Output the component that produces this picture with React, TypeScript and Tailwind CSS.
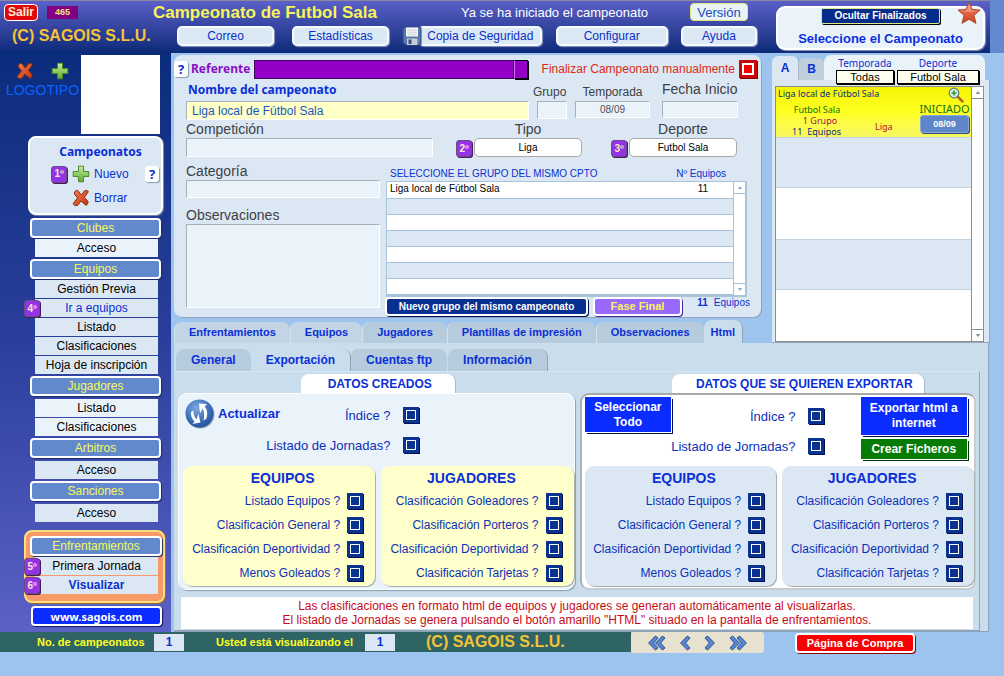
import React from "react";

const sans = "font-['Liberation_Sans',Arial,sans-serif]";
const humanist = "font-['Noto_Sans','DejaVu_Sans',sans-serif]";

function CrossIcon() {
  return (
    <svg viewBox="0 0 18 18" className="size-[18px] shrink-0" aria-hidden="true">
      <defs>
        <linearGradient id="cross" x1="0" y1="0" x2="1" y2="1">
          <stop offset="0" stopColor="#f08050" />
          <stop offset="1" stopColor="#c2330f" />
        </linearGradient>
      </defs>
      <path
        d="M4.4 1.4 Q6 1 7 3 L9.2 6 L12.6 1.8 Q14.6 0.6 16.4 2.6 L12.4 8.4 L16 12.4 Q16.6 15 14 16.4 L9 12 L5.6 16.4 Q3 17.6 1 14.8 L5.6 8.8 L2.4 5 Q1.8 2.4 4.4 1.4 Z"
        fill="url(#cross)"
        stroke="#8c2c10"
        strokeWidth="1"
        strokeLinejoin="round"
      />
    </svg>
  );
}

function PlusIcon() {
  return (
    <svg viewBox="0 0 18 18" className="size-[18px] shrink-0" aria-hidden="true">
      <defs>
        <linearGradient id="plus" x1="0" y1="0" x2="0" y2="1">
          <stop offset="0" stopColor="#c6ec9a" />
          <stop offset="1" stopColor="#5aab2e" />
        </linearGradient>
      </defs>
      <path
        d="M6.5 1.2 h5 v5.3 h5.3 v5 h-5.3 v5.3 h-5 v-5.3 h-5.3 v-5 h5.3 Z"
        fill="url(#plus)"
        stroke="#4c8a2c"
        strokeWidth="1"
        strokeLinejoin="round"
      />
    </svg>
  );
}

function FloppyIcon() {
  return (
    <svg viewBox="0 0 20 20" className="relative size-[20px] shrink-0" aria-hidden="true">
      <path d="M1 2 Q1 1 2 1 H18 Q19 1 19 2 V19 H3.5 L1 16.5 Z" fill="#5577ad" stroke="#2e4a7d" />
      <rect x="4" y="1.5" width="12" height="9" fill="#f3f5f8" />
      <path d="M5.5 4 h9 M5.5 6.2 h9 M5.5 8.4 h9" stroke="#c3c8d0" strokeWidth="0.8" />
      <rect x="5" y="12.5" width="10.5" height="6.5" fill="#c9ced6" />
      <rect x="6.5" y="13.5" width="3" height="4.5" fill="#3a4f78" />
    </svg>
  );
}

function StarIcon() {
  return (
    <svg viewBox="0 0 24 24" className="size-[24px]" aria-hidden="true">
      <defs>
        <linearGradient id="star" x1="0" y1="0" x2="0" y2="1">
          <stop offset="0" stopColor="#ee8a6c" />
          <stop offset="1" stopColor="#d0401c" />
        </linearGradient>
      </defs>
      <path
        d="M12 1 L15 8.4 L23 9 L17 14.4 L19 22.4 L12 18.2 L5 22.4 L7 14.4 L1 9 L9 8.4 Z"
        fill="url(#star)"
        stroke="#b04a30"
        strokeLinejoin="round"
      />
      <path d="M12 3.4 L14.2 9.2 L20 9.8 Q12 12 4 9.8 L9.8 9.2 Z" fill="#f7b29c" opacity="0.6" />
    </svg>
  );
}

function ZoomIcon() {
  return (
    <svg viewBox="0 0 16 16" className="size-[16px]" aria-hidden="true">
      <path d="M9.6 9.6 L14.4 14.4" stroke="#a8642c" strokeWidth="2.6" strokeLinecap="round" />
      <circle cx="6" cy="6" r="4.8" fill="#d9efe6" stroke="#5f7f86" strokeWidth="1.2" />
      <path d="M6 3.4 V8.6 M3.4 6 H8.6" stroke="#2f9a3c" strokeWidth="1.6" />
    </svg>
  );
}

function RefreshIcon() {
  return (
    <svg viewBox="0 0 30 30" className="size-[30px] shrink-0" aria-hidden="true">
      <defs>
        <radialGradient id="refresh" cx="0.4" cy="0.3" r="0.8">
          <stop offset="0" stopColor="#7fa9df" />
          <stop offset="0.7" stopColor="#3164ae" />
          <stop offset="1" stopColor="#1d4486" />
        </radialGradient>
      </defs>
      <circle cx="15.4" cy="15.6" r="14" fill="#8ea6c4" />
      <circle cx="14.5" cy="14.5" r="14" fill="url(#refresh)" />
      <path
        d="M6 13 L8.4 11.6 Q8.4 18 11.6 20.2 L13.4 14.8 L15.4 23.4 L7.4 25 L9.6 22.4 Q5.6 19 6 13 Z"
        fill="#fff"
      />
      <path
        d="M14 4.6 L22 5 L19.6 7.4 Q23.6 12 21.4 19.4 L18.6 21.6 Q20 13.6 17.6 9.6 L15 14.4 Z"
        fill="#fff"
      />
    </svg>
  );
}

function NavIcon({ double = false, flip = false }: { double?: boolean; flip?: boolean }) {
  return (
    <svg
      viewBox={double ? "0 0 18 16" : "0 0 12 16"}
      className={`h-[16px] ${double ? "w-[18px]" : "w-[12px]"} ${flip ? "rotate-180" : ""}`}
      aria-hidden="true"
    >
      <path d="M1 3 L3.6 1 L10.4 8 L3.6 15 L1 13 L5.4 8 Z" fill="#5187dc" stroke="#3a4f7a" strokeLinejoin="round" />
      {double && (
        <path d="M8 3 L10.6 1 L17.4 8 L10.6 15 L8 13 L12.4 8 Z" fill="#5187dc" stroke="#3a4f7a" strokeLinejoin="round" />
      )}
    </svg>
  );
}

function StepBadge({ n }: { n: number }) {
  return (
    <span className="flex h-[17px] w-[16px] shrink-0 items-center justify-center rounded-[3px] border border-[#6b4a86] bg-[#9333e6] text-[10px] leading-none font-bold text-[#ffe6c8] shadow-[1px_1px_0_#4a1a5c]">
      {n}º
    </span>
  );
}

function HelpButton() {
  return (
    <button
      type="button"
      aria-label="Ayuda"
      className={`flex h-[16px] w-[14px] shrink-0 items-center justify-center rounded-[3px] bg-white text-[13px] leading-none font-bold text-[#0a2fd0] shadow-[1px_1px_1px_#8a9bb0] ${humanist}`}
    >
      ?
    </button>
  );
}

const headerButton =
  "flex h-[20px] items-center justify-center rounded-[5px] border-2 border-[#f4f9fd] bg-[#dbe9f4] text-[12px] leading-none text-[#0b2fc8] shadow-[1px_1px_1px_#8b9bc0]";

function Header() {
  return (
    <header className="flex h-[53px]">
      <div className="flex min-w-0 flex-1 border-t border-[#8a8a9a] bg-linear-to-b from-[#5b60c8] to-[#0a2a78]">
        <div className="flex min-w-0 flex-1 flex-col">
          <div className="flex h-[22px] items-center pl-1">
            <button
              type="button"
              className="flex h-[17px] w-[34px] items-center justify-center rounded-[4px] border border-white bg-[#e00808] text-[12px] leading-none font-bold text-[#fff0d8]"
            >
              Salir
            </button>
            <span className="ml-[9px] flex h-[13px] w-[31px] items-center justify-center bg-[#800080] text-[9px] leading-none font-bold text-[#ffe080]">
              465
            </span>
            <h1 className="ml-[75px] text-[17px] leading-none font-bold whitespace-nowrap text-[#f8f45c]">
              Campeonato de Futbol Sala
            </h1>
            <p className="ml-auto text-[13px] leading-none whitespace-nowrap text-white">
              Ya se ha iniciado el campeonato
            </p>
            <button
              type="button"
              className="mr-[18px] ml-[42px] flex h-[18px] w-[58px] items-center justify-center rounded-[4px] border border-[#dfe67a] bg-[#eaf4f6] text-[13px] leading-none text-[#1a4ab8]"
            >
              Versión
            </button>
          </div>
          <div className="flex h-[26px] items-center pr-[9px] pl-3">
            <p className="w-[165px] text-[16px] leading-none font-bold whitespace-nowrap text-[#f2c238]">
              (C) SAGOIS S.L.U.
            </p>
            <div className="flex flex-1 items-center justify-between">
              <div className="flex gap-[18px]">
                <button type="button" className={`${headerButton} w-[97px]`}>Correo</button>
                <button type="button" className={`${headerButton} w-[97px]`}>Estadísticas</button>
              </div>
              <div className="flex items-center">
                <FloppyIcon />
                <button type="button" className={`${headerButton} -ml-[4px] w-[124px]`}>Copia de Seguridad</button>
              </div>
              <button type="button" className={`${headerButton} w-[112px]`}>Configurar</button>
              <button type="button" className={`${headerButton} w-[76px]`}>Ayuda</button>
            </div>
          </div>
        </div>
        <div className="relative mt-[5px] mr-[5px] ml-[10px] flex h-[44px] w-[209px] shrink-0 flex-col items-center rounded-[9px] border-2 border-white bg-[#ebf3fa] shadow-[1px_1px_1px_#8b9bc0]">
          <button
            type="button"
            className="flex h-[16px] w-[119px] items-center justify-center rounded-[2px] border border-[#dbe68a] bg-[#062c8a] text-[10px] leading-none font-bold text-white shadow-[1px_1px_0_#000]"
          >
            Ocultar Finalizados
          </button>
          <h2 className="mt-[8px] text-[13px] leading-none font-bold whitespace-nowrap text-[#0a2fe0]">
            Seleccione el Campeonato
          </h2>
          <span className="absolute -top-[7px] right-[2px]">
            <StarIcon />
          </span>
        </div>
      </div>
      <div className="w-[14px] bg-[#6488cf]" />
    </header>
  );
}

type Item = { label: string; tone?: string; badge?: number };
type Group = { title: string; items: Item[]; gap: string; tone: string };

const groups: Group[] = [
  { title: "Clubes", gap: "mt-px", tone: "bg-[#ebf3fa]", items: [{ label: "Acceso" }] },
  {
    title: "Equipos",
    gap: "mt-px",
    tone: "bg-[#dbe8f3]",
    items: [
      { label: "Gestión Previa" },
      { label: "Ir a equipos", tone: "text-[#0b2fd0]", badge: 4 },
      { label: "Listado" },
      { label: "Clasificaciones" },
      { label: "Hoja de inscripción" },
    ],
  },
  { title: "Jugadores", gap: "mt-[3px]", tone: "bg-[#ebf3fa]", items: [{ label: "Listado" }, { label: "Clasificaciones" }] },
  { title: "Arbitros", gap: "mt-[3px]", tone: "bg-[#dbe8f3]", items: [{ label: "Acceso" }] },
  { title: "Sanciones", gap: "mt-[3px]", tone: "bg-[#dbe8f3]", items: [{ label: "Acceso" }] },
];

const sideHeading =
  "flex h-[20px] items-center justify-center rounded-[4px] border-2 border-white bg-[#6289cc] text-[12px] leading-none text-[#f6f95a] shadow-[1px_1px_1px_#1b2c6a]";

function SideItem({ item, tone }: { item: Item; tone: string }) {
  return (
    <li className="relative">
      <a
        href="#"
        className={`flex h-[18px] items-center justify-center text-[12px] leading-none whitespace-nowrap ${tone} ${item.tone ?? "text-black"}`}
      >
        {item.label}
      </a>
      {item.badge && (
        <span className="absolute top-px -left-[11px]">
          <StepBadge n={item.badge} />
        </span>
      )}
    </li>
  );
}

function Sidebar() {
  return (
    <aside className="w-[171px] shrink-0 bg-linear-to-b from-[#0a2c7c] via-[#2a3f9c] to-[#5c61c6]">
      <div className="flex pt-[2px]">
        <div className="flex w-[81px] flex-col items-center pl-[4px]">
          <div className="mt-[7px] flex gap-[17px]">
            <button type="button" aria-label="Quitar logotipo"><CrossIcon /></button>
            <button type="button" aria-label="Añadir logotipo"><PlusIcon /></button>
          </div>
          <p className="mt-[3px] text-[14px] leading-none text-[#0a62ff]">LOGOTIPO</p>
        </div>
        <div className="h-[79px] w-[79px] bg-white" />
      </div>

      <section className="mt-[2px] ml-[28px] flex h-[79px] w-[135px] flex-col rounded-[8px] border-2 border-white bg-[#dbe8f3] shadow-[1px_1px_1px_#7f8fae]">
        <h2 className={`mt-[7px] pl-[10px] text-center text-[12px] leading-[14px] font-bold text-[#0a2fd8] ${humanist}`}>Campeonatos</h2>
        <div className="mt-[6px] flex h-[18px] items-center pr-[2px] pl-[21px]">
          <StepBadge n={1} />
          <button type="button" className="ml-[5px] flex items-center gap-[4px] text-[12px] leading-none text-[#0b2fd0]">
            <PlusIcon />
            Nuevo
          </button>
          <span className="ml-auto"><HelpButton /></span>
        </div>
        <button type="button" className="mt-[6px] ml-[42px] flex items-center gap-[4px] text-[12px] leading-none text-[#0b2fd0]">
          <CrossIcon />
          Borrar
        </button>
      </section>

      <nav className="mt-px ml-[30px] w-[131px]">
        {groups.map((g) => (
          <section key={g.title} className="pt-[2px]">
            <h3 className={sideHeading}>{g.title}</h3>
            <ul className={`ml-[5px] flex w-[123px] flex-col gap-px ${g.gap}`}>
              {g.items.map((it) => (
                <SideItem key={it.label} item={it} tone={g.tone} />
              ))}
            </ul>
          </section>
        ))}
      </nav>

      <section className="mt-[8px] ml-[24px] h-[73px] w-[141px] rounded-[8px] border-2 border-[#fbe07c] bg-[#f79a68] pt-[4px] pr-px pl-[4px] shadow-[1px_1px_0_#a86a30]">
        <h3 className={sideHeading}>Enfrentamientos</h3>
        <ul className="mt-px ml-[5px] flex w-[123px] flex-col gap-px">
          <SideItem item={{ label: "Primera Jornada", badge: 5 }} tone="bg-[#dbe8f3]" />
          <SideItem item={{ label: "Visualizar", badge: 6, tone: "font-bold text-[#0b2fd0]" }} tone="bg-[#dbe8f3]" />
        </ul>
      </section>
      <a
        href="#"
        className={`mt-[3px] mb-[6px] ml-[31px] flex h-[20px] w-[131px] items-center justify-center rounded-[4px] border-2 border-white bg-[#0a2cff] text-[11px] leading-none font-bold text-white shadow-[1px_1px_1px_#101c60] ${humanist}`}
      >
        www.sagois.com
      </a>
    </aside>
  );
}

const field =
  "block border border-t-[#a9b0b6] border-l-[#a9b0b6] border-r-white border-b-white outline-none";
const fieldLabel = "block h-[18px] text-[14px] leading-[18px] whitespace-nowrap text-[#3c4046]";
const roundSelect =
  "h-[19px] w-[108px] appearance-none rounded-[5px] border border-[#a9a9a9] bg-white text-center text-[10px] leading-none text-black [text-align-last:center]";

function ScrollBar({ tone, width }: { tone: string; width: string }) {
  return (
    <div className={`flex shrink-0 flex-col justify-between border-l bg-white ${tone} ${width}`}>
      <button type="button" aria-label="Subir" className="flex h-[12px] w-full items-center justify-center border-b border-inherit">
        <svg viewBox="0 0 6 4" className="h-[3px] w-[6px]"><path d="M0 4 L3 0 L6 4 Z" fill="currentColor" /></svg>
      </button>
      <button type="button" aria-label="Bajar" className="flex h-[12px] w-full items-center justify-center border-t border-inherit">
        <svg viewBox="0 0 6 4" className="h-[3px] w-[6px]"><path d="M0 0 L3 4 L6 0 Z" fill="currentColor" /></svg>
      </button>
    </div>
  );
}

function ChampionshipForm() {
  const rows = ["Liga local de Fútbol Sala", "", "", "", "", "", ""];
  return (
    <form className="mt-[2px] h-[262px] rounded-[8px] bg-[#dbe8f3] pt-[4px] shadow-[1px_1px_0_#8fa3bd]">
      <div className="flex h-[20px] items-center pr-[4px]">
        <HelpButton />
        <label htmlFor="referente" className={`ml-[3px] w-[63px] text-[12px] leading-none font-bold text-[#8a0fc8] ${humanist}`}>
          Referente
        </label>
        <div className="flex min-w-0 flex-1">
          <select id="referente" className="h-[19px] min-w-0 flex-1 appearance-none border border-[#3a0a5c] bg-[#9400c8] text-white" />
          <span className="h-[19px] w-[14px] border border-y-black border-r-black border-l-[#c878e0] bg-[#9400c8] shadow-[1px_1px_0_#000]" />
        </div>
        <label htmlFor="finalizar" className="ml-[14px] text-[12px] leading-none whitespace-nowrap text-[#e02818]">
          Finalizar Campeonato manualmente
        </label>
        <input
          id="finalizar"
          type="checkbox"
          className="ml-[4px] size-[18px] shrink-0 appearance-none border-3 border-[#c80808] bg-[#f80000] shadow-[inset_0_0_0_2px_#fff,1px_1px_0_#8a0000]"
        />
      </div>

      <div className="mt-[4px] flex pr-[23px] pl-[12px]">
        <div className="min-w-0 flex-1">
          <label htmlFor="nombre" className={`block h-[18px] pl-[2px] text-[12px] leading-[14px] font-bold text-[#0a2fd8] ${humanist}`}>
            Nombre del campeonato
          </label>
          <input id="nombre" defaultValue="Liga local de Fútbol Sala" className={`${field} h-[19px] w-full bg-[#ffffc8] pl-[5px] text-[12px] text-[#1a5ac0]`} />
        </div>
        <div className="ml-[4px] w-[36px]">
          <label htmlFor="grupo" className="block h-[18px] text-[12px] leading-[18px] text-[#3c4046]">Grupo</label>
          <input id="grupo" className={`${field} ml-[4px] h-[18px] w-[30px] bg-[#ebf3fa]`} />
        </div>
        <div className="ml-[6px] w-[75px]">
          <label htmlFor="temporada" className="block h-[18px] text-center text-[12px] leading-[18px] text-[#3c4046]">Temporada</label>
          <input id="temporada" defaultValue="08/09" className={`${field} h-[17px] w-full bg-[#ebf3fa] text-center text-[10px] text-[#4a4f56]`} />
        </div>
        <div className="ml-[12px] w-[76px]">
          <label htmlFor="fecha" className="block h-[18px] text-[14px] leading-[13px] whitespace-nowrap text-[#3c4046]">Fecha Inicio</label>
          <input id="fecha" className={`${field} h-[17px] w-full bg-[#ebf3fa]`} />
        </div>
      </div>

      <div className="flex pr-[24px] pl-[12px]">
        <div className="min-w-0 flex-1">
          <label htmlFor="competicion" className={fieldLabel}>Competición</label>
          <input id="competicion" className={`${field} h-[19px] w-full bg-[#ebf3fa]`} />
        </div>
        <div className="ml-[23px] flex items-end gap-[2px]">
          <StepBadge n={2} />
          <div>
            <label htmlFor="tipo" className={`${fieldLabel} text-center`}>Tipo</label>
            <select id="tipo" className={`${roundSelect} block`}><option>Liga</option></select>
          </div>
        </div>
        <div className="ml-[29px] flex items-end gap-[2px]">
          <StepBadge n={3} />
          <div>
            <label htmlFor="deporte" className={`${fieldLabel} text-center`}>Deporte</label>
            <select id="deporte" className={`${roundSelect} block`}><option>Futbol Sala</option></select>
          </div>
        </div>
      </div>

      <div className="mt-[5px] flex pr-[8px] pl-[12px]">
        <div className="w-[194px] shrink-0">
          <label htmlFor="categoria" className={fieldLabel}>Categoría</label>
          <input id="categoria" className={`${field} h-[18px] w-full bg-[#ebf3fa]`} />
          <label htmlFor="observaciones" className={`${fieldLabel} mt-[8px]`}>Observaciones</label>
          <textarea id="observaciones" className={`${field} h-[84px] w-full resize-none bg-[#ebf3fa]`} />
        </div>
        <div className="ml-[6px] min-w-0 flex-1">
          <div className="flex h-[19px] items-end justify-between pr-[27px] pl-[4px] text-[10px] leading-[14px] whitespace-nowrap text-[#0b2fd0]">
            <span>SELECCIONE EL GRUPO DEL MISMO CPTO</span>
            <span>Nº Equipos</span>
          </div>
          <div className="mr-[6px] flex h-[116px] border border-r-2 border-b-2 border-[#a9c4d8]">
            <table className="flex-1 border-collapse self-start text-[10px] leading-none text-black">
              <tbody>
                {rows.map((name, i) => (
                  <tr key={i} className={`h-[16px] border-b border-[#a4c2dc] ${i % 2 ? "bg-[#dbe8f3]" : "bg-white"}`}>
                    <td className="p-0 pb-[2px] pl-[3px]">{name}</td>
                    <td className="w-[60px] p-0 pb-[2px] text-center">{name ? "11" : ""}</td>
                  </tr>
                ))}
              </tbody>
            </table>
            <ScrollBar tone="border-[#a4c2dc] text-[#8ab0d8]" width="w-[12px]" />
          </div>
          <div className="flex">
            <button type="button" className="-ml-px flex h-[19px] w-[203px] items-center justify-center rounded-[4px] border-2 border-white bg-[#083090] text-[10px] leading-none font-bold whitespace-nowrap text-white shadow-[1px_1px_0_#02104a]">
              Nuevo grupo del mismo campeonato
            </button>
            <button type="button" className="ml-[5px] flex h-[19px] w-[89px] items-center justify-center rounded-[4px] border-2 border-white bg-[#9868ff] text-[11px] leading-none font-bold text-[#f8f45c] shadow-[1px_1px_0_#4a2c9c]">
              Fase Final
            </button>
            <p className="ml-auto pr-[3px] text-[10px] leading-[12px] text-[#0b2fd0]">
              <b className="mr-[6px]">11</b>Equipos
            </p>
          </div>
        </div>
      </div>
    </form>
  );
}

const mainTabs = [
  { label: "Enfrentamientos", tone: "bg-[#c3d5e4]" },
  { label: "Equipos", tone: "bg-[#c3d5e4]" },
  { label: "Jugadores", tone: "bg-[#b6cbdb]" },
  { label: "Plantillas de impresión", tone: "bg-[#b6cbdb]" },
  { label: "Observaciones", tone: "bg-[#b6cbdb]" },
];

function MainTabs() {
  return (
    <div role="tablist" className="mt-[3px] flex h-[23px] items-end text-[11px] leading-none font-bold text-[#0a2fd8]">
      {mainTabs.map((t) => (
        <button
          key={t.label}
          type="button"
          role="tab"
          aria-selected="false"
          className={`h-[21px] rounded-t-[8px] border-l border-[#d5e3ef] px-[14px] whitespace-nowrap ${t.tone}`}
        >
          {t.label}
        </button>
      ))}
      <button type="button" role="tab" aria-selected="true" className="h-[23px] rounded-t-[8px] border-r border-[#90a4b8] bg-[#c9dded] px-[7px] pt-[2px]">
        Html
      </button>
    </div>
  );
}

const filterSelect =
  "block h-[14px] appearance-none border border-black bg-[#fffff0] text-center text-[11px] leading-none text-black shadow-[1px_1px_0_#000] [text-align-last:center]";

function ChampionshipList() {
  return (
    <section className="flex w-[218px] shrink-0 flex-col pt-[2px]">
      <div className="relative flex h-[25px] items-end text-[12px] font-bold text-[#0a2fd8]">
        <button type="button" className="h-[24px] w-[26px] rounded-t-[6px] bg-[#dbe8f3]">A</button>
        <button type="button" className="h-[22px] w-[26px] rounded-t-[5px] border-l border-[#a8b8c8] bg-[#c0cfdc]">B</button>
        <div className={`flex h-[25px] flex-1 gap-[3px] rounded-t-[7px] bg-[#ebf3fa] pl-[12px] text-[10px] font-normal text-[#0b2fd0] ${humanist}`}>
          <div>
            <label htmlFor="filtro-temporada" className="block pt-px text-center leading-[14px]">Temporada</label>
            <select id="filtro-temporada" className={`${filterSelect} w-[58px] ${sans}`}><option>Todas</option></select>
          </div>
          <div>
            <label htmlFor="filtro-deporte" className="block pt-px text-center leading-[14px]">Deporte</label>
            <select id="filtro-deporte" className={`${filterSelect} w-[82px] ${sans}`}><option>Futbol Sala</option></select>
          </div>
        </div>
        <div className="w-[5px]" />
      </div>
      <div className="flex flex-1 border-r border-b border-[#98a8b8] bg-[#dbe8f3] pt-[6px] pr-[5px] pl-[3px]">
        <div className="flex flex-1 border border-[#8a8f94]">
          <ul className={`min-w-0 flex-1 bg-white text-[9px] ${humanist}`}>
            <li className="flex h-[50px] bg-linear-to-b from-[#f4f400] via-[#ffff20] to-[#f8f860]">
              <div className="flex w-[92px] flex-col leading-[12px] whitespace-nowrap">
                <p className="pt-px pl-[2px] text-[#0a2a80]">Liga local de Fútbol Sala</p>
                <p className="pt-[4px] pr-[10px] text-center leading-[11px] text-[#107010]">Futbol Sala</p>
                <p className="pr-[4px] text-center leading-[11px] text-[#a01050]">1 Grupo</p>
                <p className="pl-[16px] leading-[11px] text-[#0a2a80]"><span className="mr-[5px]">11</span>Equipos</p>
              </div>
              <p className="pt-[34px] pl-[7px] leading-[12px] text-[#b01030]">Liga</p>
              <div className="ml-auto flex w-[52px] flex-col items-center pr-px">
                <button type="button" aria-label="Ver campeonato" className="self-center pl-[22px]"><ZoomIcon /></button>
                <p className="text-[11px] leading-[12px] text-[#107010]">INICIADO</p>
                <p className={`flex h-[18px] w-[49px] items-center justify-center rounded-[3px] border border-[#8aa8dc] bg-[#5e86c8] text-[9px] leading-none font-bold text-white shadow-[1px_1px_0_#2c4a80] ${sans}`}>
                  08/09
                </p>
              </div>
            </li>
            <li className="h-[51px] border-y border-[#c3d3e0] bg-[#dbe8f3]" />
            <li className="h-[51px]" />
            <li className="h-[51px] border-y border-[#c3d3e0] bg-[#dbe8f3]" />
            <li className="h-[51px]" />
          </ul>
          <ScrollBar tone="border-[#8a8f94] text-[#8a8f94]" width="w-[12px]" />
        </div>
      </div>
    </section>
  );
}

function CheckRow({ id, label, size = "text-[12px]" }: { id: string; label: string; size?: string }) {
  return (
    <div className="flex h-[24px] items-center justify-end">
      <label htmlFor={id} className={`leading-none whitespace-nowrap text-[#0b2fb8] ${size}`}>{label}</label>
      <input
        id={id}
        type="checkbox"
        className="ml-[7px] size-[16px] shrink-0 appearance-none bg-[#0a3290] shadow-[inset_0_0_0_3px_#0a3290,inset_0_0_0_4px_#fff,1px_1px_0_#02104a]"
      />
    </div>
  );
}

const equipos = ["Listado Equipos ?", "Clasificación General ?", "Clasificación Deportividad ?", "Menos Goleados ?"];
const jugadores = ["Clasificación Goleadores ?", "Clasificación Porteros ?", "Clasificación Deportividad ?", "Clasificación Tarjetas ?"];

type CheckBoxGroupProps = { title: string; prefix: string; items: string[]; tone: string; headPad: string };

function CheckBoxGroup({ title, prefix, items, tone, headPad }: CheckBoxGroupProps) {
  return (
    <section className={`h-[120px] min-w-0 flex-1 rounded-[9px] pr-[12px] shadow-[1px_1px_0_#a8b0b0] ${tone}`}>
      <h4 className={`flex h-[23px] items-center justify-center text-[14px] leading-none font-bold text-[#0a2fd8] ${headPad}`}>{title}</h4>
      {items.map((label, i) => (
        <CheckRow key={label} id={`${prefix}-${i}`} label={label} />
      ))}
    </section>
  );
}

function GroupPair({ prefix, tone }: { prefix: string; tone: string }) {
  return (
    <div className="flex gap-[6px]">
      <CheckBoxGroup title="EQUIPOS" prefix={`${prefix}-equipos`} items={equipos} tone={tone} headPad="pl-[19px]" />
      <CheckBoxGroup title="JUGADORES" prefix={`${prefix}-jugadores`} items={jugadores} tone={tone} headPad="pl-0" />
    </div>
  );
}

function IndexChecks({ prefix }: { prefix: string }) {
  return (
    <div className="flex flex-col gap-[6px] pt-[8px]">
      <CheckRow id={`${prefix}-indice`} label="Índice ?" size="mr-[5px] text-[13px]" />
      <CheckRow id={`${prefix}-listado`} label="Listado de Jornadas?" size="mr-[5px] text-[13px]" />
    </div>
  );
}

const subTab = "h-[22px] rounded-t-[8px] px-[15px] text-[12px] leading-none font-bold whitespace-nowrap";
const exportButton = "text-[12px] font-bold text-white";

function ExportPanel() {
  return (
    <section className="mr-px flex flex-1 flex-col border-r border-b border-[#8fa3b8] bg-[#c9dded] pt-[6px]">
      <div role="tablist" className="flex pl-[2px] text-[#0a2fd8]">
        <button type="button" role="tab" aria-selected="false" className={`${subTab} bg-[#b6cbdb]`}>General</button>
        <button type="button" role="tab" aria-selected="true" className={`${subTab} border-r border-[#90a4b8]`}>Exportación</button>
        <button type="button" role="tab" aria-selected="false" className={`${subTab} bg-[#b6cbdb]`}>Cuentas ftp</button>
        <button type="button" role="tab" aria-selected="false" className={`${subTab} border-r border-l border-r-[#90a4b8] border-l-[#c9dded] bg-[#b6cbdb]`}>Información</button>
      </div>

      <div className="mr-[8px] flex-1 border-t border-r border-b border-t-[#d5e5f2] border-r-[#90a4b8] border-b-[#90a4b8]">
        <div className="flex gap-[5px] pt-[2px] pr-[3px] pl-[4px]">
          <div className="flex min-w-0 flex-1 flex-col items-center">
            <h3 className="ml-[4px] flex h-[19px] w-[155px] items-center justify-center rounded-t-[8px] border-r border-[#a8b8c8] bg-white pl-[4px] text-[12px] leading-none font-bold text-[#0a2fd8]">
              DATOS CREADOS
            </h3>
            <div className="h-[197px] w-full rounded-[9px] border border-white bg-[#ebf3fa] pt-px pl-[4px] shadow-[1px_1px_1px_#8a9bb0]">
              <div className="flex h-[71px] justify-between pr-[155px]">
                <button type="button" className="flex h-[37px] items-center gap-[3px] pl-[2px] text-[13px] leading-none font-bold text-[#0a2fd8]">
                  <RefreshIcon />
                  Actualizar
                </button>
                <div className="-ml-[20px]"><IndexChecks prefix="creados" /></div>
              </div>
              <GroupPair prefix="creados" tone="bg-[#ffffcc]" />
            </div>
          </div>

          <div className="flex min-w-0 flex-1 flex-col items-center">
            <h3 className="ml-[41px] flex h-[19px] w-[253px] items-center justify-center rounded-t-[8px] border-r border-[#a8b8c8] bg-white pl-[13px] text-[12px] leading-none font-bold text-[#0a2fd8]">
              DATOS QUE SE QUIEREN EXPORTAR
            </h3>
            <div className="h-[197px] w-full rounded-[9px] border-2 border-t-[#a9a9a9] border-r-[#c8ccd0] border-b-[#c8ccd0] border-l-[#a9b0b8] bg-white pl-[3px]">
              <div className="flex h-[71px] pt-px pr-[7px]">
                <button type="button" className={`${exportButton} mt-px h-[35px] w-[89px] bg-[#0a2cff] px-[8px] leading-[15px] shadow-[1px_1px_0_#fff,2px_2px_0_#02104a]`}>
                  Seleccionar Todo
                </button>
                <div className="ml-auto pr-[37px]"><IndexChecks prefix="exportar" /></div>
                <div className="mt-px flex w-[110px] flex-col gap-[4px]">
                  <button type="button" className={`${exportButton} h-[38px] bg-[#0a2cff] px-[8px] leading-[15px] shadow-[1px_1px_0_#fff,2px_2px_0_#02104a]`}>
                    Exportar html a internet
                  </button>
                  <button type="button" className={`${exportButton} h-[20px] bg-[#067c06] leading-none shadow-[1px_1px_0_#fff,2px_2px_0_#02300a]`}>
                    Crear Ficheros
                  </button>
                </div>
              </div>
              <GroupPair prefix="exportar" tone="bg-[#dbe8f3]" />
            </div>
          </div>
        </div>
        <p className="mt-[7px] mr-[6px] ml-[7px] h-[32px] bg-white pt-[2px] text-center text-[12px] leading-[14px] text-[#c80a18]">
          Las clasificaciones en formato html de equipos y jugadores se generan automáticamente al visualizarlas.
          <br />
          El listado de Jornadas se genera pulsando el botón amarillo "HTML" situado en la pantalla de enfrentamientos.
        </p>
      </div>
    </section>
  );
}

const counter = "flex h-[17px] w-[30px] items-center justify-center bg-[#dbe8f3] text-[12px] leading-none text-[#0b2fd0]";

function Footer() {
  return (
    <footer className="flex items-start">
      <div className="flex h-[20px] flex-1 items-center bg-[#2f6464] pl-[37px] text-[11px] leading-none font-bold whitespace-nowrap text-[#ffff20]">
        <span className="w-[117px]">No. de campeonatos</span>
        <span className={counter}>1</span>
        <span className="ml-[32px] w-[149px]">Usted está visualizando el</span>
        <span className={counter}>1</span>
        <span className="ml-[31px] text-[16px] text-[#f2c238]">(C) SAGOIS S.L.U.</span>
      </div>
      <nav className="flex h-[21px] w-[133px] items-center justify-center gap-[13px] rounded-[3px] bg-[#e6e2cf] pt-px">
        <button type="button" aria-label="Primero"><NavIcon double flip /></button>
        <button type="button" aria-label="Anterior"><NavIcon flip /></button>
        <button type="button" aria-label="Siguiente"><NavIcon /></button>
        <button type="button" aria-label="Último"><NavIcon double /></button>
      </nav>
      <a
        href="#"
        className="mt-px mr-[89px] ml-[31px] flex h-[20px] w-[120px] items-center justify-center rounded-[4px] border-2 border-white bg-[#f80000] text-[11px] leading-none font-bold whitespace-nowrap text-white shadow-[1px_1px_0_#900000]"
      >
        Página de Compra
      </a>
    </footer>
  );
}

export default function App() {
  return (
    <div className={`min-h-screen bg-[#9cc4ee] ${sans}`}>
      <Header />
      <div className="flex">
        <Sidebar />
        <main className="flex min-w-0 flex-1 flex-col pr-[14px] pl-[3px]">
          <div className="flex gap-[11px]">
            <div className="min-w-0 flex-1">
              <ChampionshipForm />
              <MainTabs />
            </div>
            <ChampionshipList />
          </div>
          <ExportPanel />
        </main>
      </div>
      <Footer />
    </div>
  );
}
